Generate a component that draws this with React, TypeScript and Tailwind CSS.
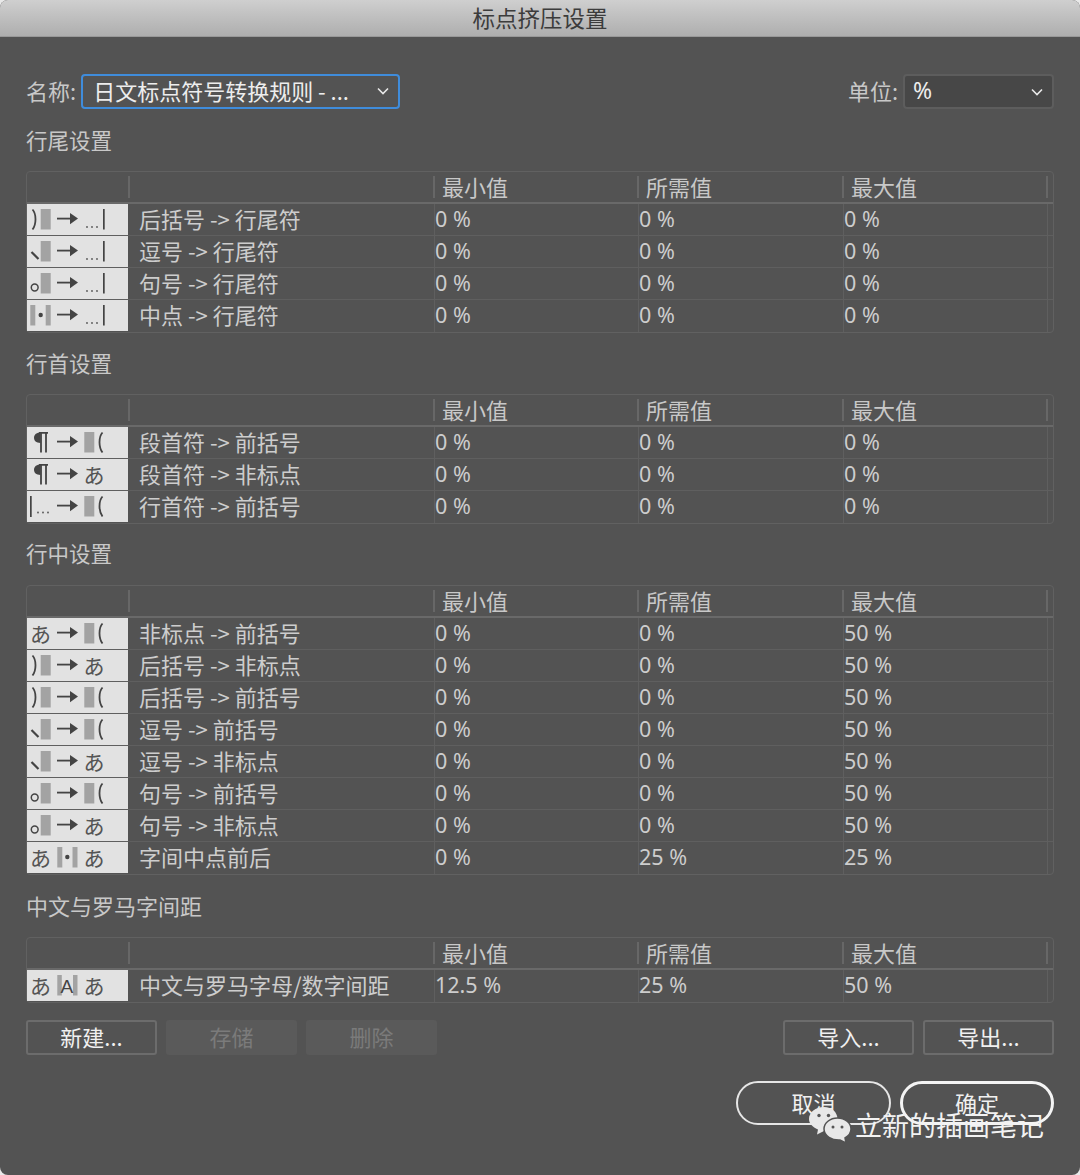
import React from "react";

type L = "close" | "comma" | "period" | "dot" | "para" | "start" | "a";
type R = "end" | "open" | "a";
type M = "arrow" | "dot" | "roman";
type Row = { l: L; m?: M; r: R; name: string; v: [string, string, string] };

const Block = ({ x, w = 10, y = 5 }: { x: number; w?: number; y?: number }) => (
  <rect x={x} y={y} width={w} height={20.5} fill="#a3a3a3" />
);

const Kana = ({ x }: { x: number }) => (
  <text x={x} y={23.5} fontSize={21} fill="#555555" fontFamily="'Noto Sans CJK JP', sans-serif">
    あ
  </text>
);

function Left({ k }: { k: L }) {
  switch (k) {
    case "close":
      return (
        <>
          <path d="M5.5 5.5 C9.5 10 9.5 20 5.5 25.5" fill="none" stroke="#444" strokeWidth={1.8} />
          <Block x={13.7} />
        </>
      );
    case "comma":
      return (
        <>
          <path d="M4.5 16 L11.5 23" fill="none" stroke="#444" strokeWidth={2.2} />
          <Block x={13.7} />
        </>
      );
    case "period":
      return (
        <>
          <circle cx={7.7} cy={19.5} r={3.4} fill="none" stroke="#444" strokeWidth={1.5} />
          <Block x={13.7} />
        </>
      );
    case "dot":
      return (
        <>
          <Block x={3.3} w={5} />
          <circle cx={13.7} cy={15} r={2.2} fill="#444" />
          <Block x={18.7} w={5} />
        </>
      );
    case "para":
      return (
        <>
          <path d="M13.5 5.5 C9 5.5 7 8 7 10.8 C7 13.6 9 16 13.5 16 Z" fill="#444" />
          <path d="M12 5.8 H21 M14 5.5 V25.5 M19 5.5 V25.5" fill="none" stroke="#444" strokeWidth={1.8} />
        </>
      );
    case "start":
      return (
        <>
          <rect x={3} y={5} width={1.7} height={21} fill="#444" />
          <circle cx={11} cy={21.5} r={0.9} fill="#555" />
          <circle cx={16} cy={21.5} r={0.9} fill="#555" />
          <circle cx={21} cy={21.5} r={0.9} fill="#555" />
        </>
      );
    default:
      return <Kana x={3} />;
  }
}

function Mid({ k }: { k: M }) {
  if (k === "arrow")
    return (
      <>
        <rect x={30} y={13.7} width={15} height={1.8} fill="#444" />
        <path d="M43 9 L51 14.6 L43 20.2 Z" fill="#444" />
      </>
    );
  if (k === "dot")
    return (
      <>
        <rect x={30.3} y={5} width={5} height={20.5} fill="#a3a3a3" />
        <circle cx={40.3} cy={15} r={2.2} fill="#444" />
        <rect x={45.5} y={5} width={5} height={20.5} fill="#a3a3a3" />
      </>
    );
  return (
    <>
      <rect x={30.3} y={5} width={4.5} height={20.5} fill="#a3a3a3" />
      <rect x={46} y={5} width={4.5} height={20.5} fill="#a3a3a3" />
      <text x={33.5} y={23} fontSize={19} fill="#444" fontFamily="'Liberation Sans', sans-serif">
        A
      </text>
    </>
  );
}

function Right({ k }: { k: R }) {
  if (k === "end")
    return (
      <>
        <circle cx={60} cy={23} r={0.9} fill="#555" />
        <circle cx={65} cy={23} r={0.9} fill="#555" />
        <circle cx={70} cy={23} r={0.9} fill="#555" />
        <rect x={76} y={5} width={1.7} height={20.5} fill="#444" />
      </>
    );
  if (k === "open")
    return (
      <>
        <Block x={57.3} />
        <path d="M75.5 5.5 C71.5 10 71.5 20 75.5 25.5" fill="none" stroke="#444" strokeWidth={1.8} />
      </>
    );
  return <Kana x={56.5} />;
}

function Glyph({ l, m = "arrow", r }: { l: L; m?: M; r: R }) {
  return (
    <svg width="101" height="31" viewBox="0 0 101 31" className="block bg-[#e2e2e2]">
      <Left k={l} />
      <Mid k={m} />
      <Right k={r} />
    </svg>
  );
}

const cols = "grid grid-cols-[103px_305px_204px_205px_204px_1fr]";

function Table({ rows }: { rows: Row[] }) {
  return (
    <div className="rounded-[4px] border border-[#616161]">
      <div className={`${cols} h-[32px] border-b-2 border-[#696969] text-[22px] leading-[30px] text-[#c8c8c8]`}>
        <div className="my-[4px] border-r-2 border-[#676767]" />
        <div className="my-[4px] border-r-2 border-[#676767]" />
        {["最小值", "所需值", "最大值"].map((h) => (
          <div key={h} className="my-[4px] flex h-[22px] items-center border-r-2 border-[#676767] pb-[2px] pl-[7px]">
            {h}
          </div>
        ))}
        <div />
      </div>
      {rows.map((row, i) => (
        <div
          key={row.name}
          className={`${cols} h-[32px] ${i < rows.length - 1 ? "border-b border-[#5f5f5f]" : ""}`}
        >
          <Glyph l={row.l} m={row.m} r={row.r} />
          <div className="whitespace-nowrap border-r border-[#5f5f5f] pl-[9px] text-[22px] leading-[29px] text-[#cdcdcd]">
            {row.name}
          </div>
          {row.v.map((v, j) => (
            <div
              key={j}
              className="border-r border-[#5f5f5f] font-['Noto_Sans',sans-serif] text-[21.5px] leading-[29px] text-[#cdcdcd]"
            >
              {v}
            </div>
          ))}
          <div />
        </div>
      ))}
    </div>
  );
}

const z: [string, string, string] = ["0 %", "0 %", "0 %"];
const m50: [string, string, string] = ["0 %", "0 %", "50 %"];

const endRows: Row[] = [
  { l: "close", r: "end", name: "后括号 -> 行尾符", v: z },
  { l: "comma", r: "end", name: "逗号 -> 行尾符", v: z },
  { l: "period", r: "end", name: "句号 -> 行尾符", v: z },
  { l: "dot", r: "end", name: "中点 -> 行尾符", v: z },
];
const startRows: Row[] = [
  { l: "para", r: "open", name: "段首符 -> 前括号", v: z },
  { l: "para", r: "a", name: "段首符 -> 非标点", v: z },
  { l: "start", r: "open", name: "行首符 -> 前括号", v: z },
];
const midRows: Row[] = [
  { l: "a", r: "open", name: "非标点 -> 前括号", v: m50 },
  { l: "close", r: "a", name: "后括号 -> 非标点", v: m50 },
  { l: "close", r: "open", name: "后括号 -> 前括号", v: m50 },
  { l: "comma", r: "open", name: "逗号 -> 前括号", v: m50 },
  { l: "comma", r: "a", name: "逗号 -> 非标点", v: m50 },
  { l: "period", r: "open", name: "句号 -> 前括号", v: m50 },
  { l: "period", r: "a", name: "句号 -> 非标点", v: m50 },
  { l: "a", m: "dot", r: "a", name: "字间中点前后", v: ["0 %", "25 %", "25 %"] },
];
const romanRows: Row[] = [
  { l: "a", m: "roman", r: "a", name: "中文与罗马字母/数字间距", v: ["12.5 %", "25 %", "50 %"] },
];

const Chevron = () => (
  <svg width="12" height="8" viewBox="0 0 12 8" fill="none" stroke="#e8e8e8" strokeWidth="1.6">
    <path d="M1 1.5 L6 6.5 L11 1.5" />
  </svg>
);

const Btn = ({ children, off }: { children: React.ReactNode; off?: boolean }) => (
  <div
    className={
      off
        ? "flex h-[35px] w-[131px] items-center justify-center rounded-[3px] bg-[#5a5a5a] pb-[2px] text-[22px] text-[#7b7b7b]"
        : "flex h-[35px] w-[131px] items-center justify-center rounded-[3px] border-2 border-[#6c6c6c] pb-[2px] text-[22px] text-[#f0f0f0]"
    }
  >
    {children}
  </div>
);

export default function App() {
  return (
    <div className="relative h-[1175px] w-[1080px] overflow-hidden bg-[#e9e9e9] font-['Noto_Sans_CJK_SC',sans-serif]">
      <div className="flex h-full flex-col overflow-hidden rounded-[8px] bg-[#535353]">
        <div className="flex h-[37px] shrink-0 items-center justify-center border-b border-[#999] bg-gradient-to-b from-[#cfcfcf] to-[#aeaeae] pb-[2px] text-[22.5px] leading-none text-[#3c3c3c]">
          标点挤压设置
        </div>
        <div className="flex flex-1 flex-col px-[26px]">
          <div className="mt-[37px] flex h-[35px] items-center justify-between">
            <div className="flex items-center gap-[5px]">
              <span className="pb-[2px] text-[22px] text-[#c8c8c8]">名称:</span>
              <div className="flex h-[35px] w-[319px] items-center justify-between rounded-[4px] border-2 border-[#3f8cdb] pb-[2px] pl-[10px] pr-[9px] text-[22px] text-[#ededed]">
                <span className="whitespace-nowrap">日文标点符号转换规则 - ...</span>
                <Chevron />
              </div>
            </div>
            <div className="flex items-center gap-[5px]">
              <span className="pb-[2px] text-[22px] text-[#c8c8c8]">单位:</span>
              <div className="flex h-[35px] w-[151px] items-center justify-between rounded-[4px] border-2 border-[#5d5d5d] bg-[#474747] pl-[8px] pr-[9px] font-['Noto_Sans',sans-serif] text-[23px] text-[#ededed]">
                <span className="pb-[2px]">%</span>
                <Chevron />
              </div>
            </div>
          </div>

          <h2 className="mb-[16px] mt-[16px] h-[30px] text-[21.5px] font-normal leading-[30px] text-[#c8c8c8]">行尾设置</h2>
          <Table rows={endRows} />

          <h2 className="mb-[16px] mt-[15px] h-[30px] text-[21.5px] font-normal leading-[30px] text-[#c8c8c8]">行首设置</h2>
          <Table rows={startRows} />

          <h2 className="mb-[17px] mt-[14px] h-[30px] text-[21.5px] font-normal leading-[30px] text-[#c8c8c8]">行中设置</h2>
          <Table rows={midRows} />

          <h2 className="mb-[17px] mt-[15px] h-[30px] text-[22px] font-normal leading-[30px] text-[#c8c8c8]">中文与罗马字间距</h2>
          <Table rows={romanRows} />

          <div className="mt-[17px] flex justify-between">
            <div className="flex gap-[9px]">
              <Btn>新建...</Btn>
              <Btn off>存储</Btn>
              <Btn off>删除</Btn>
            </div>
            <div className="flex gap-[9px]">
              <Btn>导入...</Btn>
              <Btn>导出...</Btn>
            </div>
          </div>

          <div className="mt-[26px] flex justify-end gap-[9px]">
            <div className="flex h-[44px] w-[155px] items-center justify-center rounded-full border-2 border-[#e6e6e6] pb-[2px] text-[22px] text-[#f0f0f0]">
              取消
            </div>
            <div className="flex h-[44px] w-[154px] items-center justify-center rounded-full border-[3px] border-[#f4f4f4] pb-[2px] text-[22px] text-[#f0f0f0]">
              确定
            </div>
          </div>
        </div>
      </div>

      <div className="absolute left-[808px] top-[1106px] flex items-center gap-[3px]">
        <svg width="44" height="38" viewBox="0 0 44 38">
          <path d="M16 1 C24 1 29.5 6.5 29.5 13 C29.5 19.5 24 25 16 25 L9 28.5 L10 23.5 C4.5 21 1 17.5 1 13 C1 6.5 7.5 1 16 1 Z" fill="#e8e8e8" />
          <path d="M29.5 12 C37 12 43 17 43 23 C43 27 40.5 30 37 32 L38 37 L32 34 C24 34.5 16 30 16 23 C16 17 22 12 29.5 12 Z" fill="#e8e8e8" stroke="#535353" strokeWidth="1.5" />
          <circle cx="11" cy="9.5" r="1.7" fill="#555" />
          <circle cx="20.5" cy="9.5" r="1.7" fill="#555" />
          <circle cx="25" cy="21" r="1.5" fill="#555" />
          <circle cx="34" cy="21" r="1.5" fill="#555" />
        </svg>
        <span className="whitespace-nowrap text-[27px] leading-[36px] text-[#f2f2f2]">立新的插画笔记</span>
      </div>
    </div>
  );
}
